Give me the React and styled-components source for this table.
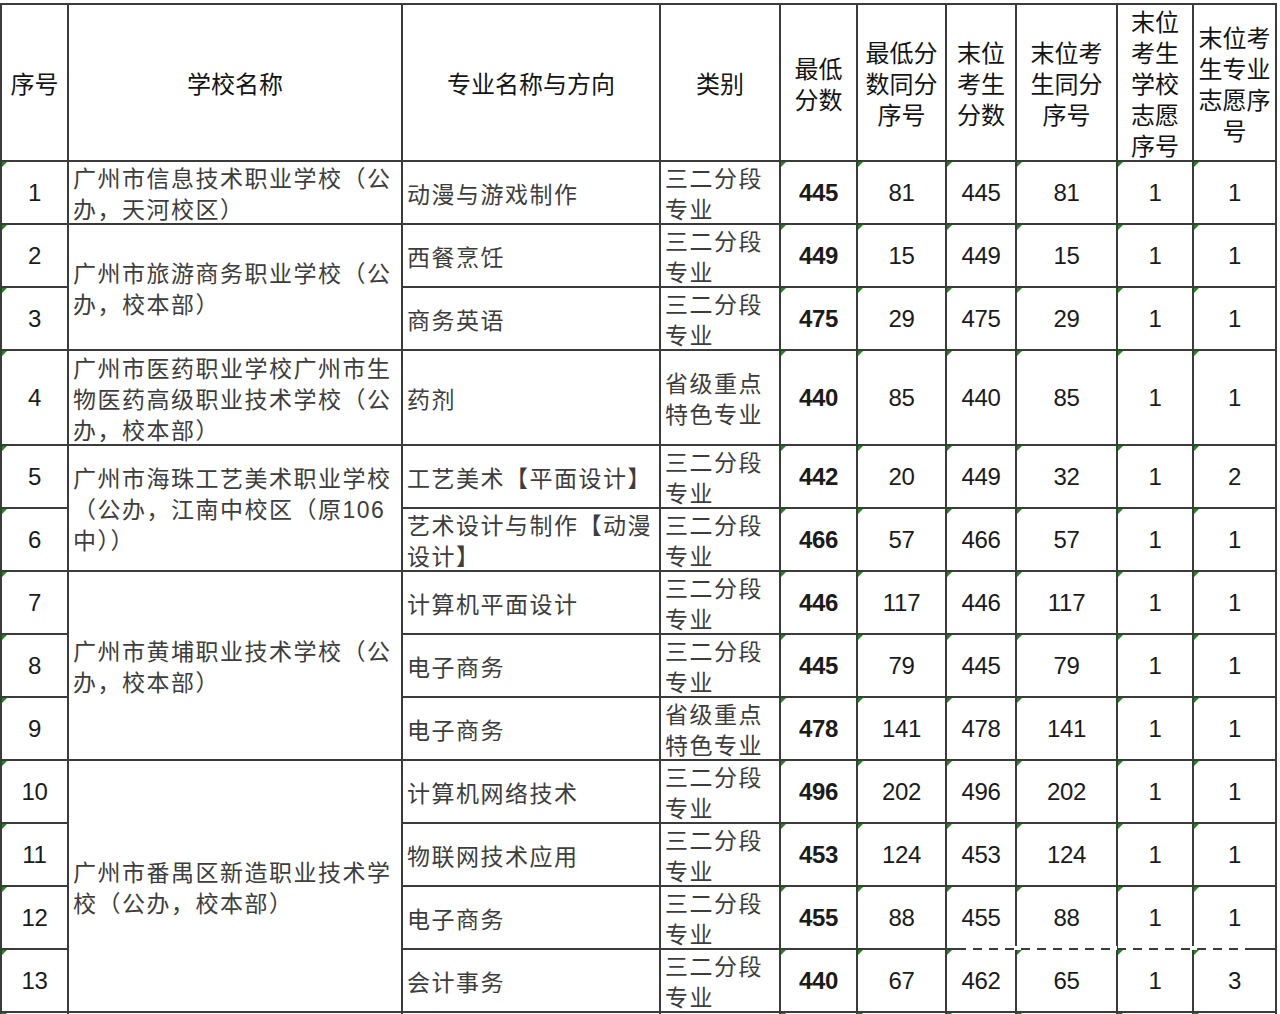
import React, { Fragment } from 'react';
import styled, { createGlobalStyle, css } from 'styled-components';

const GlobalStyle = createGlobalStyle`
  html, body {
    margin: 0;
    padding: 0;
    background: #ffffff;
    overflow: hidden;
  }
`;

const Page = styled.div`
  position: relative;
  padding-top: 3px;
  font-family: "Liberation Sans", "Noto Sans CJK SC", sans-serif;
`;

const Sheet = styled.div`
  display: grid;
  grid-template-columns: 65px 332px 256px 118px 75px 87px 68px 99px 74px 81px;
  grid-template-rows: 155px repeat(3, 61px) 93px repeat(9, 61px) 61px;
  gap: 2px;
  padding: 2px;
  width: max-content;
  background: #3b3b3b;
`;

const Cell = styled.div`
  position: relative;
  background: #ffffff;
  display: flex;
  align-items: center;
  overflow: hidden;
  white-space: nowrap;
  ${(p) => p.$rows && css`grid-row: span ${p.$rows};`}
  ${(p) =>
    p.$flag &&
    css`
      &::before {
        content: '';
        position: absolute;
        top: 0;
        left: 0;
        border-style: solid;
        border-width: 5px 5px 0 0;
        border-color: #23861f transparent transparent transparent;
      }
    `}
`;

const HeadCell = styled(Cell)`
  justify-content: center;
  text-align: center;
  color: #141414;
  font-family: "Noto Sans CJK SC", sans-serif;
  font-size: 24px;
  line-height: 31px;
`;

const TextCell = styled(Cell)`
  justify-content: flex-start;
  padding: 5px 0 0 4px;
  color: #3d3d3d;
  font-size: 23px;
  letter-spacing: 1.5px;
  line-height: 31px;
`;

const NumCell = styled(Cell)`
  justify-content: center;
  color: #1b1b1b;
  font-family: "Liberation Sans", sans-serif;
  font-size: 24px;
  font-weight: ${(p) => (p.$bold ? 700 : 400)};
  letter-spacing: -0.3px;
`;

const Lines = styled.div`
  display: flex;
  flex-direction: column;
`;

const Line = styled.span`
  display: block;
`;

const Watermark = styled.svg`
  position: absolute;
  left: 962px;
  top: 944px;
  width: 300px;
  height: 8px;
  pointer-events: none;
`;

const header = [
  ['序号'],
  ['学校名称'],
  ['专业名称与方向'],
  ['类别'],
  ['最低', '分数'],
  ['最低分', '数同分', '序号'],
  ['末位', '考生', '分数'],
  ['末位考', '生同分', '序号'],
  ['末位', '考生', '学校', '志愿', '序号'],
  ['末位考', '生专业', '志愿序', '号'],
];

const SD = ['三二分段', '专业'];
const SJ = ['省级重点', '特色专业'];

const rows = [
  { no: '1', school: ['广州市信息技术职业学校（公', '办，天河校区）'], span: 1, major: ['动漫与游戏制作'], cat: SD, v: ['445', '81', '445', '81', '1', '1'] },
  { no: '2', school: ['广州市旅游商务职业学校（公', '办，校本部）'], span: 2, major: ['西餐烹饪'], cat: SD, v: ['449', '15', '449', '15', '1', '1'] },
  { no: '3', major: ['商务英语'], cat: SD, v: ['475', '29', '475', '29', '1', '1'] },
  { no: '4', school: ['广州市医药职业学校广州市生', '物医药高级职业技术学校（公', '办，校本部）'], span: 1, major: ['药剂'], cat: SJ, v: ['440', '85', '440', '85', '1', '1'] },
  { no: '5', school: ['广州市海珠工艺美术职业学校', '（公办，江南中校区（原106', '中））'], span: 2, major: ['工艺美术【平面设计】'], cat: SD, v: ['442', '20', '449', '32', '1', '2'] },
  { no: '6', major: ['艺术设计与制作【动漫', '设计】'], cat: SD, v: ['466', '57', '466', '57', '1', '1'] },
  { no: '7', school: ['广州市黄埔职业技术学校（公', '办，校本部）'], span: 3, major: ['计算机平面设计'], cat: SD, v: ['446', '117', '446', '117', '1', '1'] },
  { no: '8', major: ['电子商务'], cat: SD, v: ['445', '79', '445', '79', '1', '1'] },
  { no: '9', major: ['电子商务'], cat: SJ, v: ['478', '141', '478', '141', '1', '1'] },
  { no: '10', school: ['广州市番禺区新造职业技术学', '校（公办，校本部）'], span: 4, major: ['计算机网络技术'], cat: SD, v: ['496', '202', '496', '202', '1', '1'] },
  { no: '11', major: ['物联网技术应用'], cat: SD, v: ['453', '124', '453', '124', '1', '1'] },
  { no: '12', major: ['电子商务'], cat: SD, v: ['455', '88', '455', '88', '1', '1'] },
  { no: '13', major: ['会计事务'], cat: SD, v: ['440', '67', '462', '65', '1', '3'] },
];

const renderLines = (arr) => (
  <Lines>
    {arr.map((l, i) => (
      <Line key={i}>{l}</Line>
    ))}
  </Lines>
);

export default function App() {
  return (
    <Page>
      <GlobalStyle />
      <Sheet>
        {header.map((h, i) => (
          <HeadCell key={`h${i}`}>{renderLines(h)}</HeadCell>
        ))}
        {rows.map((r) => (
          <Fragment key={r.no}>
            <NumCell $flag>{r.no}</NumCell>
            {r.school && <TextCell $rows={r.span}>{renderLines(r.school)}</TextCell>}
            <TextCell>{renderLines(r.major)}</TextCell>
            <TextCell>{renderLines(r.cat)}</TextCell>
            {r.v.map((val, i) => (
              <NumCell key={i} $flag $bold={i === 0}>
                {val}
              </NumCell>
            ))}
          </Fragment>
        ))}
        <NumCell $flag />
        <TextCell />
        <TextCell />
        <TextCell />
        <NumCell $flag />
        <NumCell $flag />
        <NumCell $flag />
        <NumCell $flag />
        <NumCell $flag />
        <NumCell $flag />
      </Sheet>
      <Watermark viewBox="0 0 300 8">
        <line x1="4" y1="4" x2="292" y2="4" stroke="#ffffff" strokeWidth="4" strokeDasharray="7 9" />
      </Watermark>
    </Page>
  );
}
